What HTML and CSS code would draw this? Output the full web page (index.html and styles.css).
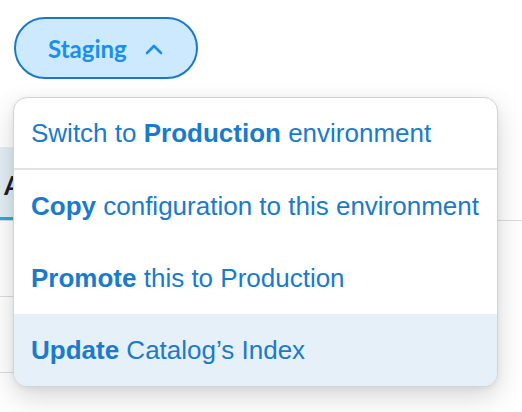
FILE: index.html
```html
<!DOCTYPE html>
<html>
<head>
<meta charset="utf-8">
<link rel="stylesheet" href="styles.css">
</head>
<body>
<div class="page">
  <div class="toolbar">
    <button class="env-btn">
      <span>Staging</span>
      <svg class="chev" width="18" height="12" viewBox="0 0 18 12"><path d="M2 10 L9 3 L16 10" fill="none" stroke="#1a8ff0" stroke-width="2.6" stroke-linecap="round" stroke-linejoin="round"/></svg>
    </button>
  </div>
  <div class="tabs">
    <div class="tab active">All</div>
  </div>
  <div class="rows">
    <div class="row"></div>
    <div class="row"></div>
  </div>
  <div class="menu">
    <div class="item first">Switch to <b>Production</b> environment</div>
    <div class="item"><b>Copy</b> configuration to this environment</div>
    <div class="item"><b>Promote</b> this to Production</div>
    <div class="item hl"><b>Update</b> Catalog’s Index</div>
  </div>
</div>
</body>
</html>
```

FILE: styles.css
```css
html, body {
  margin: 0;
  padding: 0;
  background: #ffffff;
}
.page {
  position: relative;
  width: 522px;
  height: 412px;
  overflow: hidden;
  font-family: "Liberation Sans", Arial, sans-serif;
}
.toolbar {
  padding: 17px 14px 0;
  height: 62px;
}
.env-btn {
  box-sizing: border-box;
  width: 184px;
  height: 62px;
  border: 2px solid #1b78c8;
  border-radius: 31px;
  background: #cde9fd;
  display: flex;
  align-items: center;
  padding: 0 0 0 32px;
  gap: 18px;
  font-family: Lato, "Liberation Sans", sans-serif;
  font-weight: 700;
  font-size: 24px;
  color: #1a8ff0;
}
.chev {
  display: block;
  margin-top: 1px;
}
.tabs {
  margin-top: 68px;
  display: flex;
  border-bottom: 1px solid #dcdce0;
}
.tab {
  box-sizing: border-box;
  height: 73px;
  width: 120px;
  padding: 22px 0 0 4px;
  background: #e3eef5;
  border-bottom: 3px solid #2ba6e3;
  font-family: Lato, "Liberation Sans", sans-serif;
  font-weight: 700;
  font-size: 26px;
  color: #1c1c2e;
}
.rows {
  width: 420px;
}
.row {
  height: 75px;
  border-bottom: 1px solid #dcdce0;
}
.menu {
  position: absolute;
  top: 97px;
  left: 13px;
  width: 485px;
  box-sizing: border-box;
  border: 1px solid #d2d2d8;
  border-radius: 14px;
  background: #ffffff;
  overflow: hidden;
  box-shadow: 0 10px 28px rgba(0, 0, 0, 0.16), 0 2px 6px rgba(0, 0, 0, 0.06);
}
.item {
  height: 72px;
  line-height: 72px;
  padding-left: 17px;
  font-size: 26px;
  color: #1a7acb;
  white-space: nowrap;
}
.item b {
  font-weight: 700;
}
.item.first {
  height: 70px;
  line-height: 70px;
  border-bottom: 2px solid #e2e2e6;
}
.item.hl {
  background: #e6f0f9;
}
```
